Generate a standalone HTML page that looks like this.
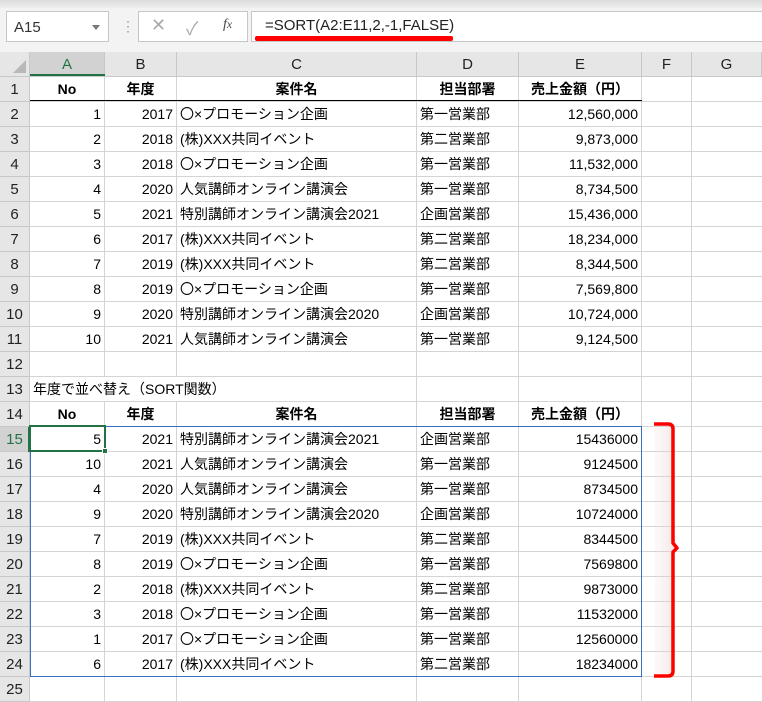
<!DOCTYPE html>
<html><head><meta charset="utf-8"><style>
*{margin:0;padding:0;box-sizing:border-box}
body{width:762px;height:702px;overflow:hidden;background:#fff;font-family:"Liberation Sans","Noto Sans CJK JP",sans-serif;position:relative}
.top{position:absolute;left:0;top:0;width:762px;height:52px;background:#f3f3f3}
.top .strip{position:absolute;left:0;top:0;width:762px;height:8px;background:linear-gradient(#dcdcdc,#eeeeee)}
.nb{position:absolute;left:6px;top:11px;width:103px;height:31px;background:#fff;border:1px solid #c6c6c6;font-size:15px;color:#333;padding:7px 0 0 7px}
.nb:after{content:"";position:absolute;right:8px;top:13px;border-left:4px solid transparent;border-right:4px solid transparent;border-top:5px solid #777}
.dots{position:absolute;left:121px;top:18px;color:#999;font-size:14px}
.fx{position:absolute;left:138px;top:11px;width:110px;height:31px;background:#fff;border:1px solid #c6c6c6}
.fb{position:absolute;left:251px;top:11px;width:520px;height:31px;background:#fff;border:1px solid #c6c6c6;font-size:15px;color:#222;padding:5px 0 0 13px}
.red{position:absolute;left:255px;top:36px;width:198px;height:5px;background:#f00;border-radius:2px}
.c{position:absolute;font-size:14px;line-height:24px;white-space:nowrap;overflow:visible;color:#000}
.h{position:absolute;background:#e6e6e6;font-size:15px;color:#222;text-align:center;line-height:25px}
.vl{position:absolute;width:1px;background:#d4d4d4}
.hl{position:absolute;height:1px;background:#d4d4d4}
</style></head><body>
<div class="top"><div class="strip"></div></div>
<div class="nb">A15</div>
<div class="dots">⋮</div>
<div class="fx"><span style="position:absolute;left:12px;top:3px;font-size:18px;color:#aaa">✕</span><span style="position:absolute;left:47px;top:3px;font-size:18px;color:#aaa">✓</span><span style="position:absolute;left:84px;top:5px;font-size:14px;font-style:italic;font-family:'Liberation Serif',serif;color:#444">f<small>x</small></span></div>
<div class="fb">=SORT(A2:E11,2,-1,FALSE)</div>
<div class="red"></div>
<div id="g"></div>
<svg style="position:absolute;left:640px;top:415px" width="50" height="270">
<defs><linearGradient id="sh" x1="0" x2="1"><stop offset="0" stop-color="#f3d6d6" stop-opacity="0.2"/><stop offset="1" stop-color="#e8d0d0" stop-opacity="0.8"/></linearGradient></defs>
<rect x="14" y="10" width="20" height="252" fill="url(#sh)" opacity="0.6"/>
<path d="M14 9 H28 Q33 9 33 14 V128 L37 133 L33 137 V256 Q33 261 28 261 H14" fill="none" stroke="#f00" stroke-width="3.5" stroke-linejoin="round"/>
</svg>
<script>
const cols=[0,30,105,177,417,519,642,692,762];
const names=["","A","B","C","D","E","F","G"];
const g=document.getElementById('g');let h='';
const T0=52,R=25;
// column headers
for(let i=0;i<8;i++){const x=cols[i],w=cols[i+1]-x;
 let bg=i==1?'#d2d2d2':'#e6e6e6';let col=i==1?'#217346':'#222';
 h+=`<div class="h" style="left:${x}px;top:${T0}px;width:${w}px;height:25px;background:${bg};color:${col};border-right:1px solid #c8c8c8;border-bottom:1px solid #c8c8c8">${names[i]}</div>`;}
h+=`<div style="position:absolute;left:30px;top:74px;width:75px;height:2px;background:#217346"></div>`;
h+=`<svg style="position:absolute;left:8px;top:58px" width="20" height="16"><path d="M18 2 V15 H5 Z" fill="#b8b8b8"/></svg>`;
const data=[
["No","年度","案件名","担当部署","売上金額（円）"],
[1,2017,"〇×プロモーション企画","第一営業部","12,560,000"],
[2,2018,"(株)XXX共同イベント","第二営業部","9,873,000"],
[3,2018,"〇×プロモーション企画","第一営業部","11,532,000"],
[4,2020,"人気講師オンライン講演会","第一営業部","8,734,500"],
[5,2021,"特別講師オンライン講演会2021","企画営業部","15,436,000"],
[6,2017,"(株)XXX共同イベント","第二営業部","18,234,000"],
[7,2019,"(株)XXX共同イベント","第二営業部","8,344,500"],
[8,2019,"〇×プロモーション企画","第一営業部","7,569,800"],
[9,2020,"特別講師オンライン講演会2020","企画営業部","10,724,000"],
[10,2021,"人気講師オンライン講演会","第一営業部","9,124,500"],
null,
"年度で並べ替え（SORT関数）",
["No","年度","案件名","担当部署","売上金額（円）"],
[5,2021,"特別講師オンライン講演会2021","企画営業部","15436000"],
[10,2021,"人気講師オンライン講演会","第一営業部","9124500"],
[4,2020,"人気講師オンライン講演会","第一営業部","8734500"],
[9,2020,"特別講師オンライン講演会2020","企画営業部","10724000"],
[7,2019,"(株)XXX共同イベント","第二営業部","8344500"],
[8,2019,"〇×プロモーション企画","第一営業部","7569800"],
[2,2018,"(株)XXX共同イベント","第二営業部","9873000"],
[3,2018,"〇×プロモーション企画","第一営業部","11532000"],
[1,2017,"〇×プロモーション企画","第一営業部","12560000"],
[6,2017,"(株)XXX共同イベント","第二営業部","18234000"],
null];
// grid lines
for(let i=2;i<8;i++)h+=`<div class="vl" style="left:${cols[i]-1}px;top:77px;height:625px"></div>`;
for(let r=0;r<25;r++){const y=77+r*R;
 h+=`<div class="hl" style="left:30px;top:${y+24}px;width:732px"></div>`;
 const sel=r==14;
 h+=`<div class="h" style="left:0;top:${y}px;width:30px;height:25px;background:${sel?'#d2d2d2':'#e6e6e6'};color:${sel?'#217346':'#222'};border-right:1px solid #c8c8c8;border-bottom:1px solid #c8c8c8">${r+1}</div>`;
 if(sel)h+=`<div style="position:absolute;left:28px;top:${y}px;width:2px;height:25px;background:#217346"></div>`;
 const d=data[r];if(d==null)continue;
 if(typeof d=="string"){h+=`<div class="c" style="left:33px;top:${y}px;background:#fff;padding-right:4px">${d}</div>`;continue;}
 const hdr=d[0]=="No";
 for(let c=0;c<5;c++){const x=cols[c+1],w=cols[c+2]-x-1;
  let al=hdr?'center':(c<2||c==4?'right':'left');
  h+=`<div class="c" style="left:${x}px;top:${y}px;width:${w}px;text-align:${al};padding:0 3px;${hdr?'font-weight:bold;':''}">${d[c]}</div>`;}
}
h+=`<div style="position:absolute;left:30px;top:100px;width:612px;height:1px;background:#000"></div>`;
h+=`<div style="position:absolute;left:30px;top:426px;width:612px;height:251px;border:1px solid #3a6fc4"></div>`;
h+=`<div style="position:absolute;left:29px;top:425px;width:77px;height:27px;border:2px solid #217346"></div>`;
h+=`<div style="position:absolute;left:102px;top:448px;width:6px;height:6px;background:#217346;border:1px solid #fff"></div>`;
g.innerHTML=h;
</script>
</body></html>
